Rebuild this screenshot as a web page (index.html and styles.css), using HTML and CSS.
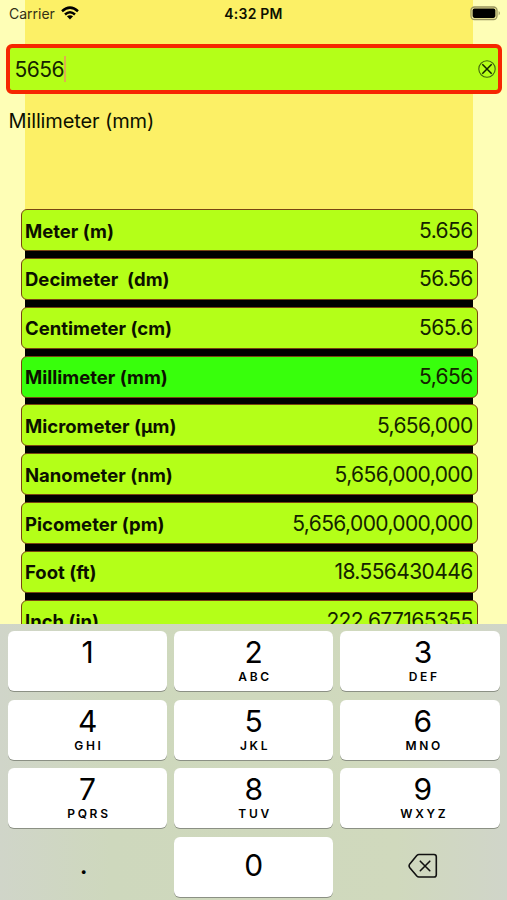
FILE: index.html
```html
<!DOCTYPE html>
<html lang="en">
<head>
<meta charset="utf-8">
<title>Length converter</title>
<link rel="stylesheet" href="styles.css">
</head>
<body>
<div class="screen">
  <header class="status">
    <div class="carrier"><span class="carrier-name">Carrier</span>
      <svg class="wifi" width="18" height="14" viewBox="0 0 18 14"><g fill="none" stroke="#000" stroke-width="2.5"><path d="M1 5.2Q9-2 17 5.2"/><path d="M4 8.5Q9 4 14 8.5"/></g><path d="M5.9 10.3Q9 8 12.1 10.3L9 13.6Z"/></svg>
    </div>
    <div class="time">4:32 PM</div>
    <svg class="battery" width="31" height="15" viewBox="0 0 31 15"><rect x="1" y="1" width="26" height="12.5" rx="3.5" fill="#f8f3a0" stroke="#98945f" stroke-width="1.3"/><rect x="2.6" y="2.6" width="22.8" height="9.3" rx="1.8"/><path d="M28.7 5Q31 7.2 28.7 9.5Z" fill="#98945f"/></svg>
  </header>
  <div class="field">
    <span class="value">5656</span><span class="caret"></span>
    <svg class="clear" width="18" height="18" viewBox="0 0 18 18" fill="none"><circle cx="9" cy="9" r="8.2" stroke="#42660c" stroke-width="1.1"/><path d="M4.3 4.3l9.4 9.4M13.7 4.3l-9.4 9.4" stroke="#122400" stroke-width="1.5"/></svg>
  </div>
  <div class="unit"><span>Millimeter (mm)</span></div>
  <main class="list">
    <div class="row"><b>Meter (m)</b><span>5.656</span></div>
    <div class="row"><b>Decimeter&nbsp; (dm)</b><span>56.56</span></div>
    <div class="row"><b>Centimeter (cm)</b><span>565.6</span></div>
    <div class="row selected"><b>Millimeter (mm)</b><span>5,656</span></div>
    <div class="row"><b>Micrometer (μm)</b><span>5,656,000</span></div>
    <div class="row"><b>Nanometer (nm)</b><span>5,656,000,000</span></div>
    <div class="row"><b>Picometer (pm)</b><span>5,656,000,000,000</span></div>
    <div class="row"><b>Foot (ft)</b><span>18.556430446</span></div>
    <div class="row"><b>Inch (in)</b><span>222.677165355</span></div>
  </main>
  <section class="keyboard">
    <div class="key"><span class="digit">1</span></div>
    <div class="key"><span class="digit">2</span><span class="letters">ABC</span></div>
    <div class="key"><span class="digit">3</span><span class="letters">DEF</span></div>
    <div class="key"><span class="digit">4</span><span class="letters">GHI</span></div>
    <div class="key"><span class="digit">5</span><span class="letters">JKL</span></div>
    <div class="key"><span class="digit">6</span><span class="letters">MNO</span></div>
    <div class="key"><span class="digit">7</span><span class="letters">PQRS</span></div>
    <div class="key"><span class="digit">8</span><span class="letters">TUV</span></div>
    <div class="key"><span class="digit">9</span><span class="letters">WXYZ</span></div>
    <div class="key plain dot"><span>.</span></div>
    <div class="key zero"><span class="digit">0</span></div>
    <div class="key plain"><svg class="delete" width="30" height="26" viewBox="0 0 30 26" fill="none" stroke="#111" stroke-width="1.6" stroke-linecap="round" stroke-linejoin="round"><path d="M11 1.5H26Q28.3 1.5 28.3 3.8V21.7Q28.3 24 26 24H11Q9.8 24 8.8 23L1.8 14.7Q.4 12.8 1.8 10.9L8.8 2.5Q9.8 1.5 11 1.5Z"/><path d="M12.3 8.2l9.5 9.5M21.8 8.2l-9.5 9.5"/></svg></div>
  </section>
</div>
</body>
</html>
```
FILE: styles.css
```css
* { box-sizing: border-box; }
body {
  margin: 0;
  font-family: Inter, "Liberation Sans", sans-serif;
  color: #0c1000;
}
.screen {
  width: 507px;
  height: 900px;
  overflow: hidden;
  display: flex;
  flex-direction: column;
  background: linear-gradient(90deg, #fefeb6 25px, #fcf066 25px, #fcf066 473px, #fefeb6 473px);
}
.status {
  height: 44px;
  flex: none;
  display: grid;
  grid-template-columns: 1fr auto 1fr;
  align-items: start;
  padding: 5px 6px 0 9px;
  font-size: 14px;
  line-height: 18px;
}
.carrier { display: flex; gap: 6px; }
.carrier-name { color: #333016; }
.wifi { margin-top: 1px; }
.time { font-weight: 600; font-size: 14px; letter-spacing: 0.2px; margin-left: -3px; }
.battery { justify-self: end; margin-top: 1px; }
.field {
  flex: none;
  height: 50px;
  margin: 0 5px 0 6px;
  border: 4px solid #f62600;
  border-radius: 6px;
  background: #b4ff18;
  display: flex;
  align-items: center;
  padding: 0 2px 0 4.5px;
}
.value { font-size: 21px; letter-spacing: -0.5px; padding-top: 1px; color: #142300; }
.caret { width: 2px; height: 26px; background: #dfae50; }
.clear { margin-left: auto; }
.unit {
  flex: none;
  height: 115px;
  padding: 14px 8.5px 0;
  font-size: 20px;
  letter-spacing: -0.12px;
  line-height: 27px;
}
.list {
  flex: none;
  height: 415px;
  overflow: clip;
  margin: 0 29.5px 0 20.5px;
  display: flex;
  flex-direction: column;
  gap: 6.85px;
  background: linear-gradient(#000, #000) 4.5px 8px / 448px 100% no-repeat;
}
.row {
  flex: none;
  height: 42px;
  border: 1px solid #784511;
  border-radius: 6px;
  background: #b4ff18;
  display: flex;
  align-items: center;
  justify-content: space-between;
  padding: 0 4.5px 0 3.5px;
}
.row b { font-size: 18.5px; font-weight: 670; padding-top: 1px; }
.row span {
  font-size: 21px;
  letter-spacing: -0.6px;
  margin-right: -0.6px;
  color: #142300;
}
.selected { background: #38ff0c; }
.keyboard {
  flex: none;
  height: 276px;
  padding: 7px 7.5px 0 8px;
  display: grid;
  grid-template-columns: repeat(3, 1fr);
  grid-auto-rows: 60px;
  gap: 8.5px 7px;
  align-content: start;
  background: linear-gradient(90deg, #d0d5c9, #ced8bd 22%, #d0d9bd 78%, #d0d5c9);
}
.key {
  display: flex;
  flex-direction: column;
  align-items: center;
  border-radius: 6px;
  background: #fff;
  box-shadow: 0 1px 0 #8b9084;
  color: #000;
}
.key:nth-child(3n) { padding-left: 6px; }
.digit { font-size: 30px; line-height: 36px; margin-top: 3px; font-weight: 400; }
.letters { font-size: 12px; line-height: 14px; font-weight: 600; letter-spacing: 2.7px; margin-right: -2.7px; }
.zero .digit { margin-top: 10px; }
.plain { background: none; box-shadow: none; justify-content: center; }
.dot { font-size: 26px; padding: 0 8px 5px 0; font-weight: 500; }
.delete { margin: -1px 0 0 1px; }
```
